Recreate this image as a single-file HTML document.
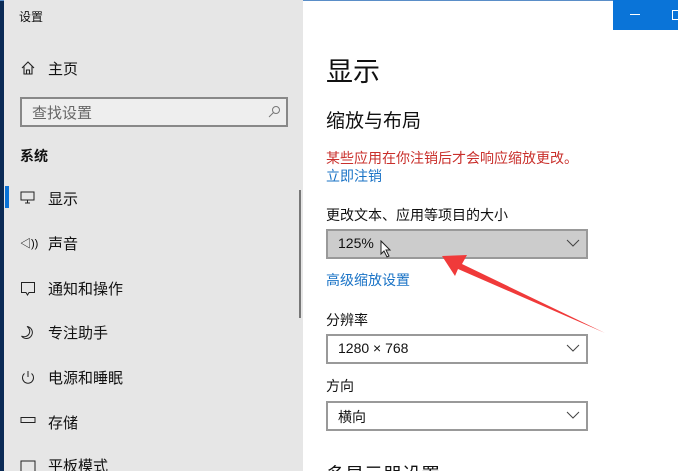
<!DOCTYPE html>
<html style="width:678px;height:471px;overflow:hidden"><head><meta charset="utf-8"><style>
body{margin:0;width:678px;height:471px;overflow:hidden;position:relative;background:#fff;font-family:"Liberation Sans","Noto Sans CJK SC",sans-serif;}
.a{position:absolute;white-space:nowrap;}
#side{position:absolute;left:4px;top:0;width:299px;height:471px;background:#e6e6e6;}
.nav{position:absolute;left:48px;font-size:15px;color:#111;}
.ic{position:absolute;left:20px;}
.dd{position:absolute;left:326px;width:258px;height:26px;border:2px solid #999;background:#fff;font-size:14px;color:#111;}
.dd span{position:absolute;left:10px;top:4px;}
.dd svg{position:absolute;right:6px;top:8px;}
</style></head><body>
<div style="position:absolute;left:0;top:0;width:4px;height:471px;background:#0a2a55"></div>
<div style="position:absolute;left:0;top:0;width:678px;height:1px;background:#5a8ec8"></div>
<div id="side"></div>
<div class="a" style="left:19px;top:8px;font-size:12px;color:#111">设置</div>
<svg class="ic" style="top:60px" width="16" height="16" viewBox="0 0 16 16"><path d="M2 8 L8 2 L14 8 M4 6.5 V14 H12 V6.5 M6.5 14 V10 H9.5 V14" fill="none" stroke="#222" stroke-width="1.1"/></svg>
<div class="nav" style="top:58px">主页</div>
<div style="position:absolute;left:20px;top:97px;width:264px;height:26px;border:2px solid #888;background:#eee"></div>
<div class="a" style="left:32px;top:102px;font-size:15px;color:#666">查找设置</div>
<svg style="position:absolute;left:268px;top:105px" width="13" height="13" viewBox="0 0 13 13"><circle cx="8" cy="5" r="3.5" fill="none" stroke="#777"/><path d="M5.5 7.5 L1 12" stroke="#777"/></svg>
<div class="a" style="left:20px;top:146px;font-size:14px;font-weight:bold;color:#111">系统</div>
<div style="position:absolute;left:5px;top:186px;width:4px;height:22px;background:#0a72d6"></div>
<svg class="ic" style="top:191px" width="16" height="14"><rect x="1" y="1" width="13" height="8" fill="none" stroke="#222"/><path d="M5 12 H10 M7.5 9 V12" stroke="#222"/></svg>
<div class="nav" style="top:188px">显示</div>
<div class="a ic" style="top:235px;font-size:11px">◁))</div>
<div class="nav" style="top:233px">声音</div>
<svg class="ic" style="top:281px" width="16" height="16"><path d="M1.5 1.5 H14.5 V11.5 H9 L7.5 14 L6 11.5 H1.5 Z" fill="none" stroke="#222"/></svg>
<div class="nav" style="top:278px">通知和操作</div>
<svg class="ic" style="top:325px" width="16" height="16"><path d="M7 1.5 A6 6 0 1 1 1.5 11 A5 5 0 0 0 7 1.5 Z" fill="none" stroke="#222"/></svg>
<div class="nav" style="top:322px">专注助手</div>
<svg class="ic" style="top:370px" width="16" height="16"><path d="M8 1 V7 M4.5 3.5 A5.5 5.5 0 1 0 11.5 3.5" fill="none" stroke="#222"/></svg>
<div class="nav" style="top:367px">电源和睡眠</div>
<svg class="ic" style="top:416px" width="16" height="10"><rect x="1" y="1.5" width="14" height="5" fill="none" stroke="#222"/></svg>
<div class="nav" style="top:412px">存储</div>
<svg class="ic" style="top:460px" width="16" height="14"><rect x="1" y="1" width="14" height="12" fill="none" stroke="#222"/></svg>
<div class="nav" style="top:455px">平板模式</div>
<div style="position:absolute;left:299px;top:190px;width:2px;height:128px;background:#777"></div>

<div style="position:absolute;left:613px;top:0;width:65px;height:30px;background:#0a74d8"></div>
<div style="position:absolute;left:630px;top:14px;width:10px;height:1px;background:#fff"></div>
<div style="position:absolute;left:672px;top:10px;width:8px;height:8px;border:1px solid #fff"></div>

<div class="a" style="left:326px;top:50px;font-size:27px;color:#111">显示</div>
<div class="a" style="left:326px;top:106px;font-size:19px;color:#111">缩放与布局</div>
<div class="a" style="left:326px;top:148px;font-size:14px;color:#c9302c">某些应用在你注销后才会响应缩放更改。</div>
<div class="a" style="left:326px;top:166px;font-size:14px;color:#1a73c6">立即注销</div>
<div class="a" style="left:326px;top:205px;font-size:14px;color:#111">更改文本、应用等项目的大小</div>
<div class="dd" style="top:229px;background:#ccc"><span>125%</span><svg width="14" height="8"><path d="M1 1 L7 7 L13 1" fill="none" stroke="#444"/></svg></div>
<div class="a" style="left:326px;top:270px;font-size:14px;color:#1a73c6">高级缩放设置</div>
<div class="a" style="left:326px;top:310px;font-size:14px;color:#111">分辨率</div>
<div class="dd" style="top:334px"><span>1280 × 768</span><svg width="14" height="8"><path d="M1 1 L7 7 L13 1" fill="none" stroke="#444"/></svg></div>
<div class="a" style="left:326px;top:376px;font-size:14px;color:#111">方向</div>
<div class="dd" style="top:401px"><span>横向</span><svg width="14" height="8"><path d="M1 1 L7 7 L13 1" fill="none" stroke="#444"/></svg></div>
<div class="a" style="left:326px;top:460px;font-size:19px;color:#111">多显示器设置</div>
<svg style="position:absolute;left:380px;top:240px" width="12" height="18"><path d="M1 1 V14 L4 11 L7 17 L9 16 L6 10 H10 Z" fill="#fff" stroke="#222" stroke-width="1"/></svg>
<svg style="position:absolute;left:0;top:0" width="678" height="471"><polygon points="442,256 467,255 462,264 605,333 458,269 455,276" fill="#f03a3a"/></svg>
</body></html>
